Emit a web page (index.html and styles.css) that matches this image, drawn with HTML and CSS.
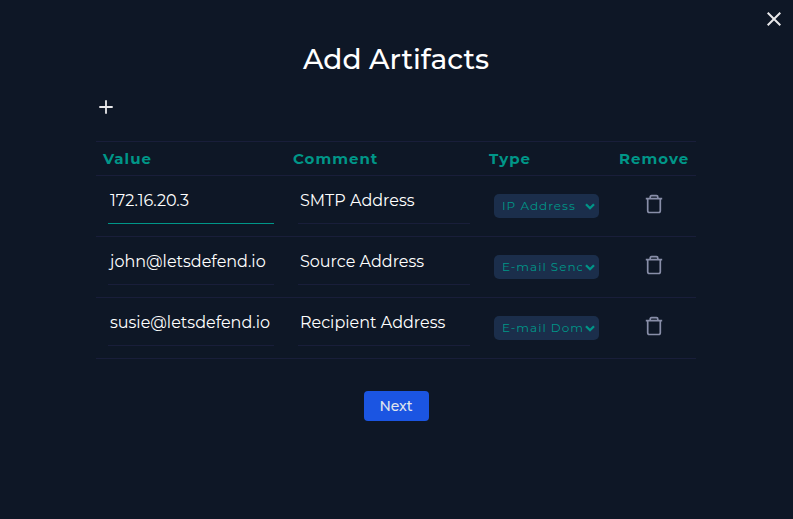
FILE: index.html
```html
<!DOCTYPE html>
<html lang="en">
<head>
<meta charset="utf-8">
<title>Add Artifacts</title>
<link rel="stylesheet" href="styles.css">
</head>
<body>
<svg width="0" height="0" class="defs">
  <symbol id="trash" viewBox="0 0 18 20"><path d="M.8 4.700h16.400M5.200 4.500V3Q5.200 1.700 6.500 1.700h5Q12.800 1.700 12.800 3V4.500M2.700 4.800V16.800Q2.700 18.500 4.400 18.500h9.200Q15.300 18.500 15.300 16.800V4.800" fill="none" stroke="currentColor" stroke-width="1.700"/></symbol>
  <symbol id="chevron" viewBox="0 0 10 7"><path d="M1 1.200l4 4 4-4" fill="none" stroke="currentColor" stroke-width="2.300"/></symbol>
</svg>
<main class="modal">
  <button class="close" aria-label="Close"><svg width="14" height="14" viewBox="0 0 14 14"><path d="M.7.700l12.600 12.600M13.300.700L.7 13.300" stroke="currentColor" stroke-width="2"/></svg></button>
  <h1>Add Artifacts</h1>
  <button class="add" aria-label="Add"><svg width="14" height="14" viewBox="0 0 14 14"><path d="M.3 7h13.400M7 .3v13.400" stroke="currentColor" stroke-width="1.800"/></svg></button>
  <section class="table">
    <div class="row head"><span>Value</span><span>Comment</span><span>Type</span><span>Remove</span></div>
    <div class="row">
      <div class="field focused">172.16.20.3</div>
      <div class="field comment">SMTP Address</div>
      <div class="select"><span>IP Address</span><svg class="chevron"><use href="#chevron"/></svg></div>
      <svg class="trash"><use href="#trash"/></svg>
    </div>
    <div class="row">
      <div class="field">john@letsdefend.io</div>
      <div class="field comment">Source Address</div>
      <div class="select"><span>E-mail Sender</span><svg class="chevron"><use href="#chevron"/></svg></div>
      <svg class="trash"><use href="#trash"/></svg>
    </div>
    <div class="row">
      <div class="field">susie@letsdefend.io</div>
      <div class="field comment">Recipient Address</div>
      <div class="select"><span>E-mail Domain</span><svg class="chevron"><use href="#chevron"/></svg></div>
      <svg class="trash"><use href="#trash"/></svg>
    </div>
  </section>
  <button class="next">Next</button>
</main>
</body>
</html>
```
FILE: styles.css
```css
* { box-sizing: border-box; }
body { margin: 0; background: #0e1726; color: #fff; font-family: Montserrat, Inter, "Open Sans", sans-serif; }
button { border: 0; background: none; padding: 0; margin: 0; font: inherit; color: #e8e8ea; }
.defs { position: absolute; }
.modal { position: relative; height: 519px; padding: 40px 97px 0 96px; overflow: hidden; }
.close { position: absolute; top: 12px; right: 12px; line-height: 0; }
h1 { margin: 0; height: 40px; font-size: 28px; line-height: 38px; font-weight: 500; text-align: center; }
.add { display: block; margin: 20px 0 0 3px; height: 14px; line-height: 0; }
.table { margin-top: 27px; border-top: 1px solid #191e3a; }
.row { display: grid; grid-template-columns: 190px 196px 130px 84px; height: 61px; border-bottom: 1px solid #191e3a; }
.head { height: 34px; align-items: center; padding-left: 7px; color: #009688; font-size: 15px; line-height: 20px; font-weight: 700; letter-spacing: 1px; }
.field { width: 166px; height: 48px; margin-left: 12px; padding: 12px 0 0 2px; border-bottom: 1px solid #191e3a; font-size: 16px; line-height: 26px; white-space: nowrap; }
.field.comment { width: 172px; }
.field.focused { border-color: #009688; }
.select { display: flex; align-items: center; justify-content: space-between; width: 105px; height: 24px; margin: 18px 0 0 12px; padding: 0 4px 0 8px; border-radius: 5px; background: #1b2e4b; color: #009688; font-size: 12px; line-height: 16px; letter-spacing: 1px; }
.select span { width: 80px; margin-top: -1px; overflow: hidden; white-space: nowrap; }
.chevron { width: 10px; height: 7px; flex: none; }
.trash { width: 18px; height: 20px; margin: 18px 0 0 33px; color: #888ea8; }
.next { display: block; width: 65px; height: 30px; margin: 32px auto 0; border-radius: 4px; background: #1b55e2; color: #e0e6ed; font-size: 14px; font-weight: 500; line-height: 30px; }
```
